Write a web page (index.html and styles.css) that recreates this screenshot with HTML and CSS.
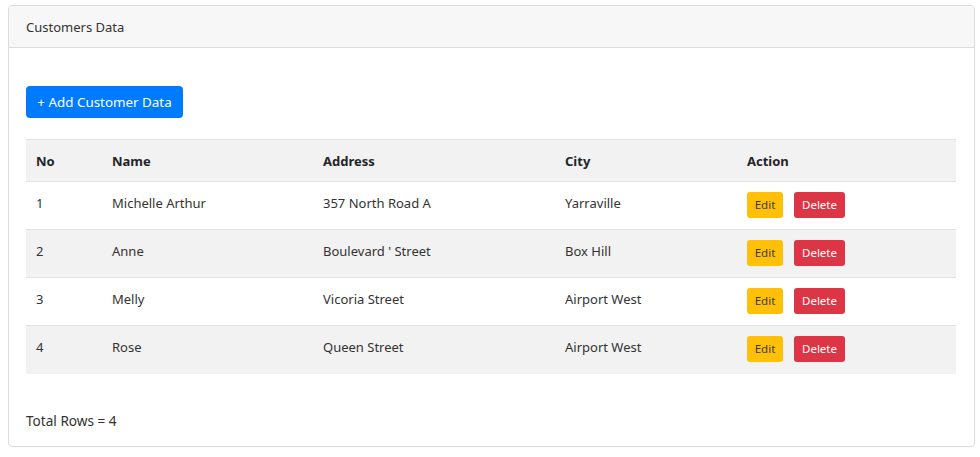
FILE: index.html
```html
<!DOCTYPE html>
<html>
<head>
<meta charset="utf-8">
<link rel="stylesheet" href="styles.css">
</head>
<body>
<div class="card">
  <div class="card-header">Customers Data</div>
  <div class="card-body">
    <button class="btn btn-add">+ Add Customer Data</button>
    <table class="table">
      <colgroup>
        <col class="c-no"><col class="c-name"><col class="c-addr"><col class="c-city"><col class="c-act">
      </colgroup>
      <thead>
        <tr><th>No</th><th>Name</th><th>Address</th><th>City</th><th>Action</th></tr>
      </thead>
      <tbody>
        <tr><td>1</td><td>Michelle Arthur</td><td>357 North Road A</td><td>Yarraville</td><td class="act"><span class="btn-sm edit">Edit</span><span class="btn-sm del">Delete</span></td></tr>
        <tr class="odd"><td>2</td><td>Anne</td><td>Boulevard ' Street</td><td>Box Hill</td><td class="act"><span class="btn-sm edit">Edit</span><span class="btn-sm del">Delete</span></td></tr>
        <tr><td>3</td><td>Melly</td><td>Vicoria Street</td><td>Airport West</td><td class="act"><span class="btn-sm edit">Edit</span><span class="btn-sm del">Delete</span></td></tr>
        <tr class="odd"><td>4</td><td>Rose</td><td>Queen Street</td><td>Airport West</td><td class="act"><span class="btn-sm edit">Edit</span><span class="btn-sm del">Delete</span></td></tr>
      </tbody>
    </table>
    <div class="total">Total Rows = 4</div>
  </div>
</div>
</body>
</html>
```
FILE: styles.css
```css
* { box-sizing: border-box; }
body {
  margin: 5px 5px 0 8px;
  font-family: "Noto Sans", "Open Sans", sans-serif;
  font-size: 13px;
  color: #212529;
  background: #fff;
}
.card {
  border: 1px solid #dcdcdc;
  border-radius: 4px;
  width: 967px;
  height: 442px;
  display: flex;
  flex-direction: column;
}
.card-header {
  height: 42px;
  background: #f7f7f7;
  border-bottom: 1px solid #dcdcdc;
  padding: 0 17px;
  display: flex;
  align-items: center;
  color: #333;
  border-radius: 4px 4px 0 0;
}
.card-body {
  padding: 38px 18px 0 17px;
}
.btn-add {
  display: block;
  height: 32px;
  width: 157px;
  background: #007bff;
  color: #fff;
  border: none;
  border-radius: 4px;
  font-family: inherit;
  font-size: 13.4px;
  padding: 0;
}
.table {
  margin-top: 21px;
  width: 930px;
  border-collapse: collapse;
  table-layout: fixed;
}
.c-no { width: 76px; }
.c-name { width: 211px; }
.c-addr { width: 242px; }
.c-city { width: 182px; }
.c-act { width: 219px; }
th {
  text-align: left;
  font-weight: 700;
  height: 42px;
  padding: 0 10px;
  background: #f2f2f2;
  border-top: 1px solid #e3e3e3;
  color: #212529;
}
td {
  height: 48px;
  padding: 11px 10px 0;
  line-height: 20px;
  vertical-align: top;
  border-top: 1px solid #e3e3e3;
  color: #333;
}
td.act {
  padding-top: 0;
  padding-bottom: 1px;
  vertical-align: middle;
}
tr.odd td { background: #f2f2f2; }
.btn-sm {
  display: inline-flex;
  align-items: center;
  justify-content: center;
  height: 26px;
  border-radius: 3px;
  font-size: 11.5px;
  vertical-align: middle;
}
.edit { width: 36px; background: #ffc107; color: #3a3a3a; }
.del { width: 51px; background: #dc3545; color: #fff; margin-left: 11px; }
.total {
  margin-top: 37px;
  font-size: 13.6px;
  color: #333;
}
```
